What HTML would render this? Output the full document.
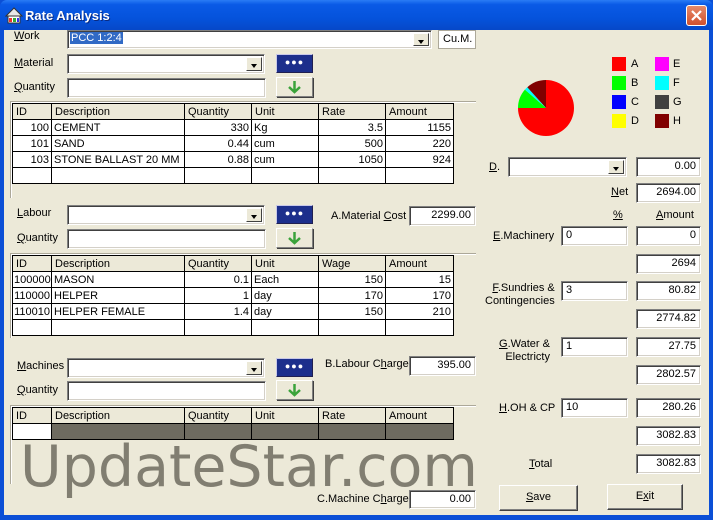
<!DOCTYPE html>
<html><head><meta charset="utf-8"><style>
*{box-sizing:border-box;margin:0;padding:0}
body{width:713px;height:520px;overflow:hidden;background:#0b4fd6;font-family:"Liberation Sans",Arial,sans-serif;font-size:11px;color:#000;position:relative}
.title{position:absolute;left:0;top:0;width:713px;height:30px;background:linear-gradient(#2a7cf5 0%,#0a5ae6 15%,#0553dc 60%,#0648c8 100%);border-radius:7px 7px 0 0}
.title span{position:absolute;left:25px;top:8px;color:#fff;font-weight:bold;font-size:13px;text-shadow:1px 1px #0a2a80}
.close{position:absolute;left:686px;top:5px;width:21px;height:21px;border:1px solid #fff;border-radius:3px;background:linear-gradient(#e58a6a,#d3502c)}
.body{position:absolute;left:4px;top:30px;width:705px;height:485px;background:#ece9d8}
.a{position:absolute}
.lbl{position:absolute;white-space:nowrap;font-size:11px}
.in{position:absolute;background:#fff;border-top:1px solid #808080;border-left:1px solid #808080;border-right:1px solid #fff;border-bottom:1px solid #fff;box-shadow:inset 1px 1px 0 #404040,inset -1px -1px 0 #d4d0c8;padding:2px 4px;font-size:11px;white-space:nowrap}
.r{text-align:right}
.dd{position:absolute;right:2px;top:2px;width:16px;bottom:2px;background:#ece9d8;border:1px solid;border-color:#fff #404040 #404040 #fff}
.dd:after{content:"";position:absolute;left:4px;top:6px;border-left:3.5px solid transparent;border-right:3.5px solid transparent;border-top:4px solid #000}
.dots{position:absolute;width:37px;height:19px;background:#1c2f8c;border:1px solid;border-color:#c8c8e8 #202050 #202050 #c8c8e8;text-align:center;color:#fff;font-size:9px;line-height:15px;letter-spacing:1px}
.arr{position:absolute;width:37px;height:20px;background:#ece9d8;border:1px solid;border-color:#fff #808080 #808080 #fff;box-shadow:1px 1px 0 #404040}
.frame{position:absolute;border-top:1px solid #aca899;border-left:1px solid #aca899;box-shadow:inset 1px 1px 0 #fff}
table{position:absolute;border-collapse:collapse;font-size:11px;table-layout:fixed}
td{border:1px solid #000;height:16px;padding:0 2px;white-space:nowrap;overflow:hidden;background:#fff}
tr.h td{background:#ece9d8;padding-left:3px}
td.n{text-align:right}
.btn{position:absolute;background:#ece9d8;border:1px solid;border-color:#fff #404040 #404040 #fff;box-shadow:inset -1px -1px 0 #808080;text-align:center;line-height:23px}
.sq{position:absolute;width:14px;height:14px}
u{text-decoration:underline}
.wm{position:absolute;left:20px;top:434px;font-family:"DejaVu Sans",sans-serif;font-size:57px;color:rgba(110,107,95,0.85);letter-spacing:0px;white-space:nowrap}
</style></head><body>
<div class="title">
<svg class="a" style="left:5px;top:7px" width="18" height="17"><path d="M1 9 L9 1 L17 9 Z" fill="#e8e8e8" stroke="#333"/><rect x="3" y="9" width="12" height="7" fill="#fff" stroke="#333"/><rect x="4" y="11" width="3" height="4" fill="#e33"/><rect x="8" y="11" width="3" height="4" fill="#3a3"/><rect x="12" y="11" width="2" height="4" fill="#33e"/></svg>
<span>Rate Analysis</span>
<div class="close"><svg width="19" height="19"><path d="M5 5 L14 14 M14 5 L5 14" stroke="#fff" stroke-width="2.2"/></svg></div>
</div>
<div class="body"></div>

<div class="lbl" style="left:14px;top:30px"><u>W</u>ork</div>
<div class="in" style="left:67px;top:30px;width:365px;height:19px;padding:1px 2px"><span style="background:#316ac5;color:#fff;padding:0 1px">PCC 1:2:4</span><div class="dd"></div></div>
<div class="in" style="left:438px;top:30px;width:38px;height:19px;border:1px solid #aca899;box-shadow:none">Cu.M.</div>

<div class="lbl" style="left:14px;top:57px"><u>M</u>aterial</div>
<div class="in" style="left:67px;top:54px;width:198px;height:20px"><div class="dd"></div></div>
<div class="dots" style="left:276px;top:54px">●●●</div>
<div class="lbl" style="left:14px;top:81px"><u>Q</u>uantity</div>
<div class="in" style="left:67px;top:78px;width:199px;height:20px"></div>
<div class="arr" style="left:276px;top:77px"><svg width="35" height="18"><path d="M17.5 3 V14 M12 9 L17.5 14 L23 9" stroke="#3aa33a" stroke-width="2.5" fill="none"/></svg></div>

<div class="frame" style="left:10px;top:101px;width:466px;height:97px"></div>
<table style="left:12px;top:103px;width:441px">
<colgroup><col style="width:39px"><col style="width:133px"><col style="width:67px"><col style="width:67px"><col style="width:67px"><col style="width:68px"></colgroup>
<tr class="h"><td>ID</td><td>Description</td><td>Quantity</td><td>Unit</td><td>Rate</td><td>Amount</td></tr>
<tr><td class="n">100</td><td>CEMENT</td><td class="n">330</td><td>Kg</td><td class="n">3.5</td><td class="n">1155</td></tr>
<tr><td class="n">101</td><td>SAND</td><td class="n">0.44</td><td>cum</td><td class="n">500</td><td class="n">220</td></tr>
<tr><td class="n">103</td><td>STONE BALLAST 20 MM</td><td class="n">0.88</td><td>cum</td><td class="n">1050</td><td class="n">924</td></tr>
<tr><td></td><td></td><td></td><td></td><td></td><td></td></tr>
</table>

<div class="lbl" style="left:17px;top:207px"><u>L</u>abour</div>
<div class="in" style="left:67px;top:205px;width:198px;height:20px"><div class="dd"></div></div>
<div class="dots" style="left:276px;top:205px">●●●</div>
<div class="lbl" style="left:331px;top:210px">A.Material <u>C</u>ost</div>
<div class="in r" style="left:409px;top:206px;width:67px;height:20px">2299.00</div>
<div class="lbl" style="left:17px;top:232px"><u>Q</u>uantity</div>
<div class="in" style="left:67px;top:229px;width:199px;height:20px"></div>
<div class="arr" style="left:276px;top:228px"><svg width="35" height="18"><path d="M17.5 3 V14 M12 9 L17.5 14 L23 9" stroke="#3aa33a" stroke-width="2.5" fill="none"/></svg></div>

<div class="frame" style="left:10px;top:253px;width:466px;height:85px"></div>
<table style="left:12px;top:255px;width:441px">
<colgroup><col style="width:39px"><col style="width:133px"><col style="width:67px"><col style="width:67px"><col style="width:67px"><col style="width:68px"></colgroup>
<tr class="h"><td>ID</td><td>Description</td><td>Quantity</td><td>Unit</td><td>Wage</td><td>Amount</td></tr>
<tr><td class="n" style="padding:0 1px">100000</td><td>MASON</td><td class="n">0.1</td><td>Each</td><td class="n">150</td><td class="n">15</td></tr>
<tr><td class="n" style="padding:0 1px">110000</td><td>HELPER</td><td class="n">1</td><td>day</td><td class="n">170</td><td class="n">170</td></tr>
<tr><td class="n" style="padding:0 1px">110010</td><td>HELPER FEMALE</td><td class="n">1.4</td><td>day</td><td class="n">150</td><td class="n">210</td></tr>
<tr><td></td><td></td><td></td><td></td><td></td><td></td></tr>
</table>

<div class="lbl" style="left:17px;top:360px"><u>M</u>achines</div>
<div class="in" style="left:67px;top:358px;width:198px;height:20px"><div class="dd"></div></div>
<div class="dots" style="left:276px;top:358px">●●●</div>
<div class="lbl" style="left:325px;top:358px">B.Labour C<u>h</u>arge</div>
<div class="in r" style="left:409px;top:356px;width:67px;height:20px">395.00</div>
<div class="lbl" style="left:17px;top:384px"><u>Q</u>uantity</div>
<div class="in" style="left:67px;top:381px;width:199px;height:20px"></div>
<div class="arr" style="left:276px;top:380px"><svg width="35" height="18"><path d="M17.5 3 V14 M12 9 L17.5 14 L23 9" stroke="#3aa33a" stroke-width="2.5" fill="none"/></svg></div>

<div class="frame" style="left:10px;top:405px;width:466px;height:79px"></div>
<table style="left:12px;top:407px;width:441px">
<colgroup><col style="width:39px"><col style="width:133px"><col style="width:67px"><col style="width:67px"><col style="width:67px"><col style="width:68px"></colgroup>
<tr class="h"><td>ID</td><td>Description</td><td>Quantity</td><td>Unit</td><td>Rate</td><td>Amount</td></tr>
<tr><td></td><td style="background:#6e6b60"></td><td style="background:#6e6b60"></td><td style="background:#6e6b60"></td><td style="background:#6e6b60"></td><td style="background:#6e6b60"></td></tr>
</table>

<div class="wm">UpdateStar.com</div>

<div class="lbl" style="left:317px;top:493px">C.Machine C<u>h</u>arge</div>
<div class="in r" style="left:409px;top:490px;width:67px;height:19px">0.00</div>

<svg class="a" style="left:0;top:0" width="713" height="520">
<path d="M546 108 L546 80 A28 28 0 1 1 518 108 Z" fill="#ff0000"/>
<path d="M546 108 L518 108 A28 28 0 0 1 524.9 89.6 Z" fill="#00ff00"/>
<path d="M546 108 L524.9 89.6 A28 28 0 0 1 527.3 87.2 Z" fill="#00ffff"/>
<path d="M546 108 L527.3 87.2 A28 28 0 0 1 546 80 Z" fill="#800000"/>
</svg>
<div class="sq" style="left:612px;top:57px;background:#ff0000"></div><div class="lbl" style="left:631px;top:58px">A</div>
<div class="sq" style="left:612px;top:76px;background:#00ff00"></div><div class="lbl" style="left:631px;top:77px">B</div>
<div class="sq" style="left:612px;top:95px;background:#0000ff"></div><div class="lbl" style="left:631px;top:96px">C</div>
<div class="sq" style="left:612px;top:114px;background:#ffff00"></div><div class="lbl" style="left:631px;top:115px">D</div>
<div class="sq" style="left:655px;top:57px;background:#ff00ff"></div><div class="lbl" style="left:673px;top:58px">E</div>
<div class="sq" style="left:655px;top:76px;background:#00ffff"></div><div class="lbl" style="left:673px;top:77px">F</div>
<div class="sq" style="left:655px;top:95px;background:#404040"></div><div class="lbl" style="left:673px;top:96px">G</div>
<div class="sq" style="left:655px;top:114px;background:#800000"></div><div class="lbl" style="left:673px;top:115px">H</div>

<div class="lbl" style="left:489px;top:161px"><u>D</u>.</div>
<div class="in" style="left:508px;top:157px;width:119px;height:20px"><div class="dd"></div></div>
<div class="in r" style="left:636px;top:157px;width:65px;height:20px">0.00</div>
<div class="lbl" style="left:611px;top:186px"><u>N</u>et</div>
<div class="in r" style="left:636px;top:183px;width:65px;height:20px">2694.00</div>
<div class="lbl" style="left:613px;top:209px"><u>%</u></div>
<div class="lbl" style="left:656px;top:209px"><u>A</u>mount</div>
<div class="lbl" style="left:493px;top:230px"><u>E</u>.Machinery</div>
<div class="in" style="left:561px;top:226px;width:67px;height:20px">0</div>
<div class="in r" style="left:636px;top:226px;width:65px;height:20px">0</div>
<div class="in r" style="left:636px;top:254px;width:65px;height:20px">2694</div>
<div class="lbl" style="left:485px;top:282px;text-align:right;line-height:13px"><u>F</u>.Sundries &amp;<br>Contingencies</div>
<div class="in" style="left:561px;top:281px;width:67px;height:20px">3</div>
<div class="in r" style="left:636px;top:281px;width:65px;height:20px">80.82</div>
<div class="in r" style="left:636px;top:309px;width:65px;height:20px">2774.82</div>
<div class="lbl" style="left:499px;top:338px;text-align:right;line-height:13px"><u>G</u>.Water &amp;<br>Electricty</div>
<div class="in" style="left:561px;top:337px;width:67px;height:20px">1</div>
<div class="in r" style="left:636px;top:337px;width:65px;height:20px">27.75</div>
<div class="in r" style="left:636px;top:365px;width:65px;height:20px">2802.57</div>
<div class="lbl" style="left:499px;top:402px"><u>H</u>.OH &amp; CP</div>
<div class="in" style="left:561px;top:398px;width:67px;height:20px">10</div>
<div class="in r" style="left:636px;top:398px;width:65px;height:20px">280.26</div>
<div class="in r" style="left:636px;top:426px;width:65px;height:20px">3082.83</div>
<div class="lbl" style="left:529px;top:458px"><u>T</u>otal</div>
<div class="in r" style="left:636px;top:454px;width:65px;height:20px">3082.83</div>
<div class="btn" style="left:499px;top:485px;width:79px;height:26px"><u>S</u>ave</div>
<div class="btn" style="left:607px;top:484px;width:76px;height:26px">E<u>x</u>it</div>
</body></html>
